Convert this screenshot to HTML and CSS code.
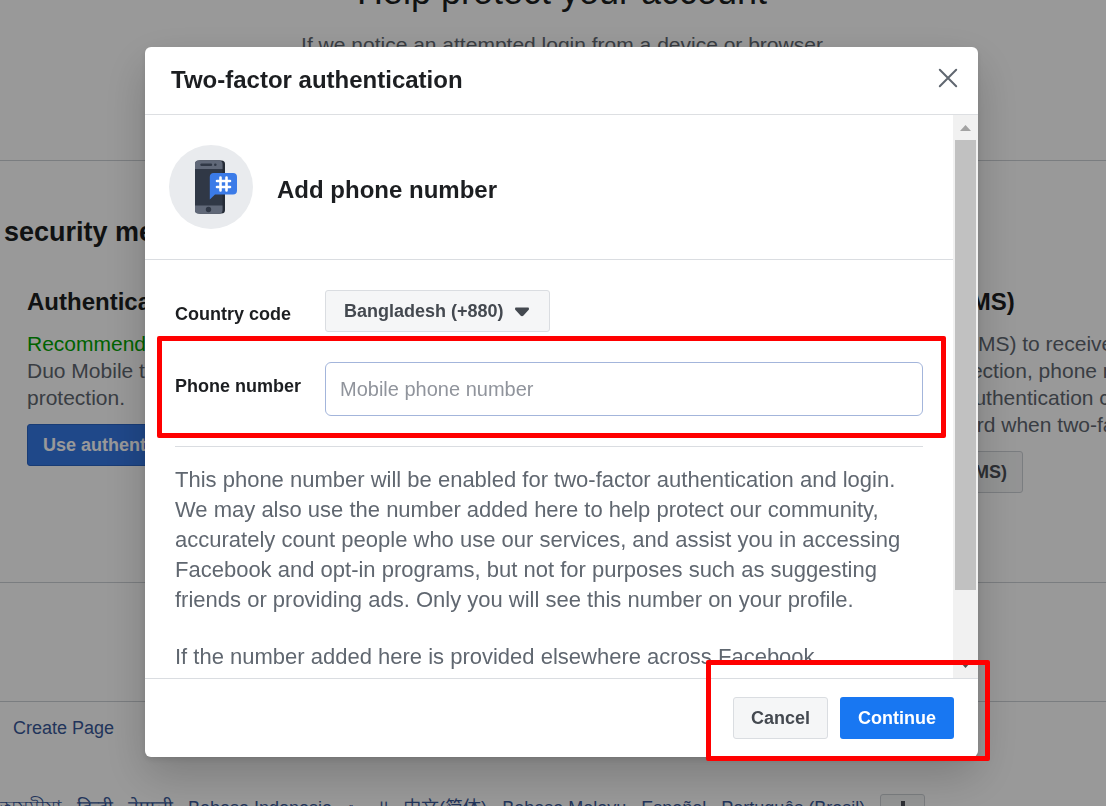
FILE: index.html
```html
<!DOCTYPE html>
<html lang="en">
<head>
<meta charset="utf-8">
<title>Two-factor authentication</title>
<link rel="stylesheet" href="styles.css">
</head>
<body>
<div class="page">
  <header class="hero">
    <h1 class="hero-title">Help protect your account</h1>
    <p class="hero-text">If we notice an attempted login from a device or browser</p>
  </header>
  <main class="methods">
    <h2 class="methods-title">security method</h2>
    <div class="method-grid">
      <section class="method">
        <h3 class="method-title">Authentication app</h3>
        <p class="method-text"><span class="recommended">Recommended</span><br>Duo Mobile to<br>protection.</p>
        <button class="btn btn-blue" type="button">Use authentication</button>
      </section>
      <section class="method method-last">
        <h3 class="method-title">Text message (SMS)</h3>
        <p class="method-text">Use text message (SMS) to receive<br>codes. For your protection, phone numbers<br>used for two-factor authentication can't<br>to reset your password when two-factor</p>
        <button class="btn btn-plain" type="button">Use text message (SMS)</button>
      </section>
    </div>
  </main>
  <footer class="footer">
    <a class="footer-link" href="#">Create Page</a>
    <nav class="languages">
      <a class="indic" href="#">অসমীয়া</a><a class="indic" href="#">हिन्दी</a><a class="indic" href="#">नेपाली</a><a href="#">Bahasa Indonesia</a><a class="arabic" href="#">العربية</a><a href="#">中文(简体)</a><a href="#">Bahasa Melayu</a><a href="#">Español</a><a href="#">Português (Brasil)</a>
      <button class="more" type="button" aria-label="More languages"><svg width="18" height="18" viewBox="0 0 18 18"><path d="M7 0h4v7h7v4h-7v7H7v-7H0V7h7z"/></svg></button>
    </nav>
  </footer>
</div>

<div class="overlay">
  <form class="dialog" role="dialog" aria-labelledby="dialog-title">
    <div class="dialog-head">
      <h2 class="dialog-title" id="dialog-title">Two-factor authentication</h2>
      <button class="close" type="button" aria-label="Close"><svg width="20" height="20" viewBox="0 0 20 20"><path d="M1.800 1.800l16.400 16.400M18.200 1.800L1.800 18.200"/></svg></button>
    </div>
    <div class="dialog-main">
      <div class="dialog-content">
        <div class="intro">
          <svg class="intro-icon" width="84" height="84" viewBox="0 0 84 84">
            <circle cx="42" cy="42" r="42" fill="#e9ebee"/>
            <rect x="28" y="15.500" width="28" height="53" rx="3.500" fill="#252b36"/>
            <rect x="26" y="15.500" width="27.500" height="53" rx="3.500" fill="#303846"/>
            <path d="M26 24v-5a3.500 3.500 0 0 1 3.500-3.500H50a3.500 3.500 0 0 1 3.500 3.500v5zM26 60.500v4.500a3.500 3.500 0 0 0 3.500 3.500H50a3.500 3.500 0 0 0 3.500-3.500v-4.500z" fill="#606878"/>
            <path d="M32.500 19.800h9.500" stroke="#303846" stroke-width="2.400" stroke-linecap="round"/>
            <circle cx="46.300" cy="19.800" r="1.300" fill="#303846"/>
            <circle cx="39.500" cy="64.500" r="2.700" fill="#303846"/>
            <path d="M44.500 28H64a4 4 0 0 1 4 4v13.500a4 4 0 0 1-4 4H46l-5.200 5V32a4 4 0 0 1 3.700-4z" fill="#3b7be8"/>
            <path d="M51.500 32.500v13M57.500 32.500v13M48 36h13M48 42h13" fill="none" stroke="#fff" stroke-width="2.600" stroke-linecap="round"/>
          </svg>
          <h3 class="intro-title">Add phone number</h3>
        </div>
        <div class="fields">
          <div class="field">
            <label class="field-label" for="country">Country code</label>
            <div class="select-wrap">
              <select class="select" id="country"><option>Bangladesh (+880)</option></select>
              <svg class="caret" width="14" height="10" viewBox="0 0 14 10"><path d="M0.500 0.500h13q1 1.500 0 2.500L8.500 8.500q-1.500 1.500-3 0L.5 3q-1-1 0-2.500z"/></svg>
            </div>
          </div>
          <div class="field field-phone">
            <label class="field-label" for="phone">Phone number</label>
            <input class="input" id="phone" type="tel" placeholder="Mobile phone number">
            <div class="mark mark-phone"></div>
          </div>
          <div class="notes">
            <p>This phone number will be enabled for two-factor authentication and login. We may also use the number added here to help protect our community, accurately count people who use our services, and assist you in accessing Facebook and opt-in programs, but not for purposes such as suggesting friends or providing ads. Only you will see this number on your profile.</p>
            <p>If the number added here is provided elsewhere across Facebook</p>
          </div>
        </div>
      </div>
      <div class="scrollbar">
        <svg class="arrow-up" width="25" height="25" viewBox="0 0 25 25"><path d="M7 16l5.500-6 5.500 6z"/></svg>
        <div class="thumb"></div>
        <svg class="arrow-down" width="25" height="25" viewBox="0 0 25 25"><path d="M7 9l5.500 6 5.500-6z"/></svg>
      </div>
    </div>
    <div class="dialog-foot">
      <button class="btn btn-light" type="button">Cancel</button>
      <button class="btn btn-primary" type="submit">Continue</button>
      <div class="mark mark-actions"></div>
    </div>
  </form>
</div>
</body>
</html>
```

FILE: styles.css
```css
* { box-sizing: border-box; }

body {
  margin: 0;
  height: 100vh;
  overflow: hidden;
  background: #fff;
  color: #1c1e21;
  font-family: "Liberation Sans", Arial, "Noto Sans CJK SC", sans-serif;
}

h1, h2, h3, p { margin: 0; }

button, input, select { font-family: inherit; }

a { color: #385898; text-decoration: none; }

.page {
  height: 100vh;
  overflow: hidden;
  white-space: nowrap;
}

.hero {
  display: flow-root;
  height: 161px;
  padding-left: 18px;
  border-bottom: 1px solid #ccd0d5;
  text-align: center;
}

.hero-title {
  margin-top: -28px;
  font-size: 36px;
  font-weight: 400;
  line-height: 40px;
}

.hero-text {
  margin-top: 19px;
  color: #606770;
  font-size: 21px;
  line-height: 27px;
}

.methods {
  height: 422px;
  padding: 55px 0 0 4px;
  border-bottom: 1px solid #ccd0d5;
}

.methods-title { font-size: 27px; line-height: 32px; }

.method-grid {
  display: grid;
  grid-template-columns: repeat(3, minmax(378px, 1fr));
  padding: 40px 0 0 23px;
}

.method-last { grid-column: 3; }

.method-title { font-size: 24px; line-height: 28px; }

.method-text {
  margin: 14px 0 13px;
  color: #606770;
  font-size: 21px;
  line-height: 27px;
}

.recommended { color: #00a400; }

.btn {
  height: 42px;
  padding: 0 17px;
  border: 1px solid transparent;
  border-radius: 3px;
  font-size: 18px;
  font-weight: 700;
}

.method .btn { padding: 0 15px; }

.btn-blue { background: #3578e5; border-color: #2a64c4; color: #fff; }
.btn-plain { background: #f5f6f7; border-color: #ccd0d5; color: #4b4f56; }
.btn-light { background: #f5f6f7; border-color: #dadde1; color: #444950; }
.btn-primary { background: #1877f2; color: #fff; }

.footer { padding-top: 118px; }

.footer-link {
  display: block;
  padding: 14px 0 0 13px;
  border-top: 1px solid #ccd0d5;
  font-size: 18px;
  line-height: 24px;
}

.languages {
  display: flex;
  gap: 15px;
  margin-top: 54px;
  font-size: 18px;
  line-height: 28px;
}

.indic { font-size: 19px; }
.arabic { font-size: 15px; }

.more {
  flex: none;
  width: 45px;
  height: 34px;
  padding: 0;
  border: 1px solid #ccd0d5;
  border-radius: 3px;
  background: #f5f6f7;
}

.more svg { fill: #4b4f56; }

.overlay {
  position: fixed;
  inset: 0;
  display: flex;
  padding: 47px 128px 49px 145px;
  background: rgba(0, 0, 0, 0.4);
}

.dialog {
  flex: 1;
  display: flex;
  flex-direction: column;
  min-width: 0;
  border-radius: 6px;
  background: #fff;
  box-shadow: 0 18px 45px rgba(0, 0, 0, 0.2), 0 3px 6px rgba(0, 0, 0, 0.1);
}

.dialog-head {
  display: flex;
  align-items: center;
  justify-content: space-between;
  height: 68px;
  padding: 0 20px 2px 26px;
  border-bottom: 1px solid #dddfe2;
}

.dialog-title, .intro-title { font-size: 24px; line-height: 28px; }

.close {
  display: flex;
  padding: 0 0 4px;
  border: 0;
  background: none;
}

.close svg {
  fill: none;
  stroke: #606770;
  stroke-width: 2;
  stroke-linecap: round;
}

.dialog-main {
  flex: 1;
  display: flex;
  min-height: 0;
}

.dialog-content {
  flex: 1;
  min-width: 0;
  overflow: hidden;
}

.intro {
  display: flex;
  align-items: center;
  gap: 24px;
  padding: 30px 24px;
  border-bottom: 1px solid #dadde1;
}

.intro-title { padding-top: 6px; }

.fields { padding: 30px; }

.field {
  display: grid;
  grid-template-columns: 150px 1fr;
  align-items: start;
  margin-bottom: 30px;
}

.field-phone { position: relative; }

.field-label {
  padding-top: 12px;
  font-size: 18px;
  font-weight: 700;
  line-height: 24px;
}

.select-wrap {
  position: relative;
  justify-self: start;
}

.select {
  display: block;
  height: 42px;
  padding: 0 45px 0 18px;
  border: 1px solid #dadde1;
  border-radius: 3px;
  background: #f5f6f7;
  color: #444950;
  font-size: 18px;
  font-weight: 700;
  appearance: none;
}

.caret {
  position: absolute;
  top: 17px;
  right: 21px;
  fill: #444950;
  pointer-events: none;
}

.input {
  width: 100%;
  height: 54px;
  padding: 0 14px;
  border: 1px solid #a3b5db;
  border-radius: 6px;
  background: #fff;
  color: #1c1e21;
  font-size: 20px;
}

.input::placeholder { color: #90949c; }

.notes {
  padding-top: 18px;
  border-top: 1px solid #dadde1;
  color: #606770;
  font-size: 22px;
  line-height: 30px;
}

.notes p + p { margin-top: 27px; }

.scrollbar {
  display: flex;
  flex-direction: column;
  width: 25px;
  background: #f1f1f1;
}

.thumb {
  width: 21px;
  height: 80%;
  margin: 0 auto;
  background: #c1c1c1;
}

.arrow-up { fill: #a3a3a3; }
.arrow-down { margin-top: auto; fill: #505050; }

.dialog-foot {
  position: relative;
  display: flex;
  justify-content: flex-end;
  gap: 12px;
  padding: 18px 24px;
  border-top: 1px solid #dadde1;
}

.mark {
  position: absolute;
  border: 5px solid #f00;
  border-radius: 2px;
  pointer-events: none;
}

.mark-phone { inset: -26px -23px -22px -18px; }

.mark-actions { inset: -19px -12px -4px auto; width: 284px; }
```
